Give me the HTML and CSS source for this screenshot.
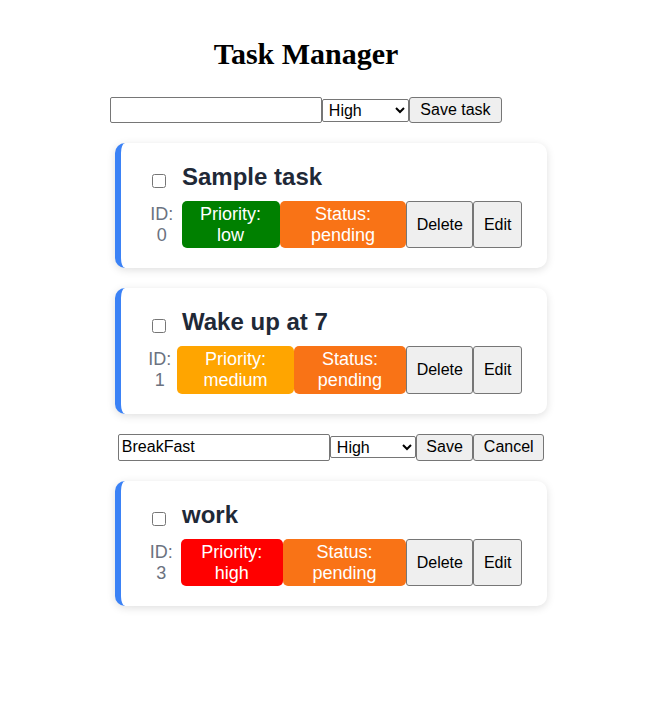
FILE: index.html
```html
<!DOCTYPE html>
<html lang="en">
<head>
<meta charset="utf-8">
<title>Task Manager</title>
<link rel="stylesheet" href="styles.css">
</head>
<body>
<div class="app">
  <h1 class="app-title">Task Manager</h1>
  <form class="add-form">
    <input class="text-input" type="text">
    <select class="prio-select">
      <option>High</option>
      <option>Medium</option>
      <option>Low</option>
    </select>
    <button type="button" class="btn btn-save-task">Save task</button>
  </form>
  <ul class="task-list">
    <li class="card">
      <div class="card-head">
        <input type="checkbox" class="check">
        <h3 class="task-title">Sample task</h3>
      </div>
      <div class="meta">
        <span class="task-id">ID: 0</span>
        <span class="badge prio-low">Priority: low</span>
        <span class="badge status-pending">Status: pending</span>
        <button type="button" class="btn">Delete</button>
        <button type="button" class="btn">Edit</button>
      </div>
    </li>
    <li class="card">
      <div class="card-head">
        <input type="checkbox" class="check">
        <h3 class="task-title">Wake up at 7</h3>
      </div>
      <div class="meta">
        <span class="task-id">ID: 1</span>
        <span class="badge prio-medium">Priority: medium</span>
        <span class="badge status-pending">Status: pending</span>
        <button type="button" class="btn">Delete</button>
        <button type="button" class="btn">Edit</button>
      </div>
    </li>
    <li class="edit-item">
      <form class="edit-form">
        <input class="text-input" type="text" value="BreakFast">
        <select class="prio-select edit-select">
          <option>High</option>
          <option>Medium</option>
          <option>Low</option>
        </select>
        <button type="button" class="btn">Save</button>
        <button type="button" class="btn">Cancel</button>
      </form>
    </li>
    <li class="card">
      <div class="card-head">
        <input type="checkbox" class="check">
        <h3 class="task-title">work</h3>
      </div>
      <div class="meta">
        <span class="task-id">ID: 3</span>
        <span class="badge prio-high">Priority: high</span>
        <span class="badge status-pending">Status: pending</span>
        <button type="button" class="btn">Delete</button>
        <button type="button" class="btn">Edit</button>
      </div>
    </li>
  </ul>
</div>
</body>
</html>
```

FILE: styles.css
```css
html, body {
  margin: 0;
  padding: 0;
  background: #ffffff;
}

body {
  font-family: "Liberation Sans", Arial, sans-serif;
  color: #000;
}

.app {
  width: 596px;
  margin-left: 8px;
}

.app-title {
  font-family: "Liberation Serif", "Times New Roman", serif;
  font-weight: bold;
  font-size: 30px;
  line-height: 37px;
  text-align: center;
  margin: 35px 0 0;
}

.add-form {
  display: flex;
  justify-content: center;
  align-items: center;
  margin-top: 25px;
}

.text-input {
  box-sizing: border-box;
  width: 212px;
  height: 26px;
  border: 1px solid #767676;
  border-radius: 2px;
  padding: 1px 3px;
  font-family: "Liberation Sans", Arial, sans-serif;
  font-size: 16px;
  color: #000;
  background: #fff;
  margin: 0;
}

.prio-select {
  box-sizing: border-box;
  width: 87px;
  height: 23px;
  border: 1px solid #767676;
  border-radius: 2px;
  font-family: "Liberation Sans", Arial, sans-serif;
  font-size: 16px;
  background: #fff;
  color: #000;
  margin: 0;
  padding: 0 0 0 2px;
}

.btn {
  box-sizing: border-box;
  font-family: "Liberation Sans", Arial, sans-serif;
  font-size: 16px;
  color: #000;
  background: #efefef;
  border: 1px solid #767676;
  border-radius: 3px;
  padding: 0 9.5px;
  margin: 0;
  height: 26px;
}

.btn-save-task {
  padding: 0 10.5px;
}

.task-list {
  list-style: none;
  margin: 20px 0 0 107px;
  padding: 0;
  width: 432px;
}

.card {
  box-sizing: border-box;
  width: 432px;
  background: #fff;
  border-left: 6px solid #3b82f6;
  border-radius: 10px;
  box-shadow: 0 2px 8px rgba(0, 0, 0, 0.13);
  padding: 20px 25px 20px 22px;
  margin-bottom: 20px;
}

.card-head {
  display: flex;
  align-items: flex-start;
}

.check {
  width: 14px;
  height: 14px;
  margin: 11px 16px 0 9px;
  flex-shrink: 0;
}

.task-title {
  margin: 0;
  font-size: 24px;
  line-height: 28px;
  font-weight: bold;
  color: #1f2937;
}

.meta {
  display: flex;
  align-items: stretch;
  margin-top: 10px;
  font-size: 18px;
  line-height: 20.7px;
  text-align: center;
}

.task-id {
  color: #6b7280;
  padding: 3px 0 3px 2px;
  margin-right: 3px;
}

.badge {
  color: #fff;
  padding: 3px 8px;
  border-radius: 5px;
}

.prio-low { background: #008000; }
.prio-medium { background: #ffa500; }
.prio-high { background: #ff0000; }
.status-pending { background: #f97316; }

.meta .btn {
  height: auto;
}

.edit-item {
  margin-bottom: 20px;
}

.edit-form {
  display: flex;
  justify-content: center;
  align-items: center;
}

.edit-form .text-input {
  height: 27px;
}

.edit-form .edit-select {
  width: 86px;
  height: 22px;
}

.edit-form .btn {
  height: 27px;
}
```
